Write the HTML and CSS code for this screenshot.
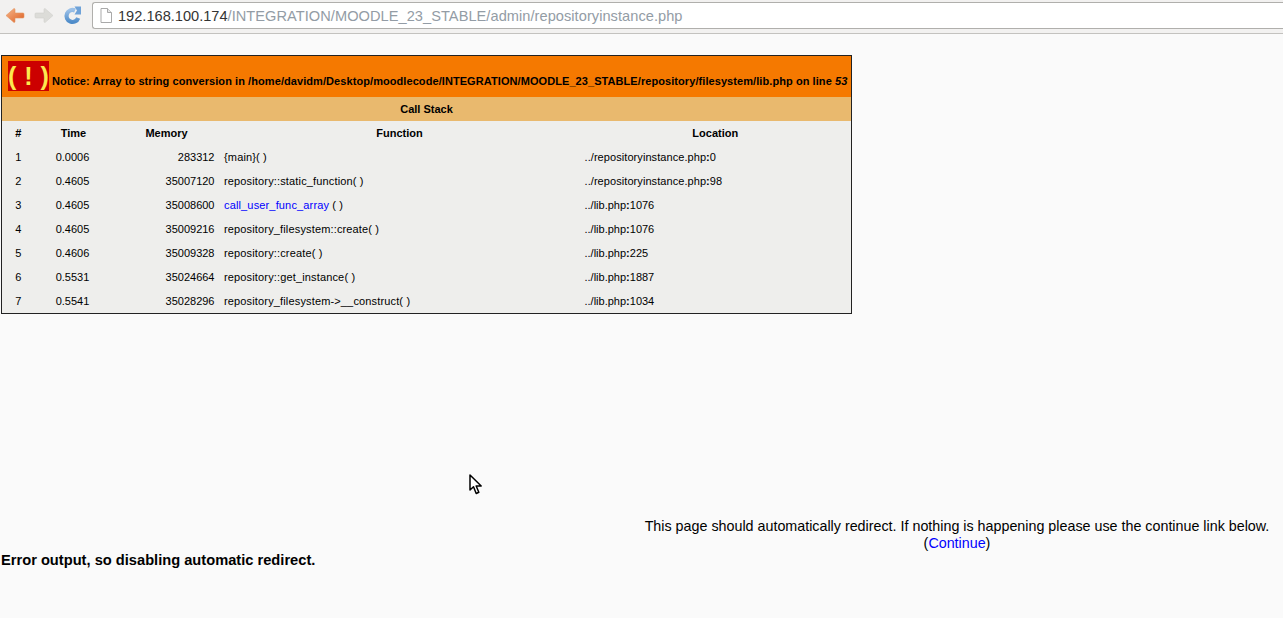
FILE: index.html
```html
<!DOCTYPE html>
<html lang="en">
<head>
<meta charset="utf-8">
<title>repositoryinstance.php</title>
<link rel="stylesheet" href="styles.css">
</head>
<body>
<header class="toolbar">
  <svg class="nav-icon" width="20" height="20" viewBox="0 0 20 20"><defs><linearGradient id="back" x1="0" y1="0" x2="1" y2="1"><stop offset="0" stop-color="#f6b68a"/><stop offset="1" stop-color="#dd5f22"/></linearGradient></defs><path d="M9 3.500 L1 10.500 L9 17.500 Q10 17.500 10 16.500 L10 13 L18 13 Q19 13 19 12 L19 9 Q19 8 18 8 L10 8 L10 4.500 Q10 3.500 9 3.500 Z" fill="url(#back)" stroke="#e2935f" stroke-width="0.600"/></svg>
  <svg class="nav-icon" width="20" height="20" viewBox="0 0 20 20"><path d="M11 3.500 L19 10.500 L11 17.500 Q10 17.500 10 16.500 L10 13 L2 13 Q1 13 1 12 L1 9 Q1 8 2 8 L10 8 L10 4.500 Q10 3.500 11 3.500 Z" fill="#dcdcd8" stroke="#d0d0cc" stroke-width="0.600"/></svg>
  <svg class="nav-icon" width="20" height="20" viewBox="0 0 20 20"><defs><linearGradient id="reload" x1="0" y1="0" x2="0" y2="1"><stop offset="0" stop-color="#9cc1e8"/><stop offset="1" stop-color="#4f8cc9"/></linearGradient></defs><path d="M15.200 13 A6 6 0 1 1 12 5.500" fill="none" stroke="url(#reload)" stroke-width="4.200"/><path d="M11.500 1.500 L18 1.500 L18 9.500 L11.500 9.500 L14 5.500 Z" fill="#6ea2d8"/></svg>
  <div class="address">
    <svg class="page-icon" width="12" height="15" viewBox="0 0 12 15"><path d="M1 .5 H7.500 L11.500 4.500 V14.500 H1 Z" fill="#fff" stroke="#a9a9a9"/><path d="M7.500 .5 V4.500 H11.500" fill="#e8e8e8" stroke="#a9a9a9"/></svg>
    <span class="host">192.168.100.174</span><span class="path">/INTEGRATION/MOODLE_23_STABLE/admin/repositoryinstance.php</span>
  </div>
</header>
<main class="page">
  <table class="xdebug">
    <colgroup>
      <col class="c-num"><col class="c-time"><col class="c-mem"><col class="c-func"><col class="c-loc">
    </colgroup>
    <tr class="notice-row">
      <th colspan="5"><div class="notice"><span class="alert">( ! )</span><span class="message">Notice: Array to string conversion in /home/davidm/Desktop/moodlecode/INTEGRATION/MOODLE_23_STABLE/repository/filesystem/lib.php on line <i>53</i></span></div></th>
    </tr>
    <tr class="stack-title"><th colspan="5">Call Stack</th></tr>
    <tr class="heads"><th class="num">#</th><th class="nudge">Time</th><th class="nudge">Memory</th><th>Function</th><th>Location</th></tr>
    <tr><td class="num">1</td><td class="time">0.0006</td><td class="mem">283312</td><td class="func">{main}( )</td><td class="loc wide">../repositoryinstance.php<b>:</b>0</td></tr>
    <tr><td class="num">2</td><td class="time">0.4605</td><td class="mem">35007120</td><td class="func">repository::static_function( )</td><td class="loc wide">../repositoryinstance.php<b>:</b>98</td></tr>
    <tr><td class="num">3</td><td class="time">0.4605</td><td class="mem">35008600</td><td class="func"><a href="#">call_user_func_array</a> ( )</td><td class="loc">../lib.php<b>:</b>1076</td></tr>
    <tr><td class="num">4</td><td class="time">0.4605</td><td class="mem">35009216</td><td class="func">repository_filesystem::create( )</td><td class="loc">../lib.php<b>:</b>1076</td></tr>
    <tr><td class="num">5</td><td class="time">0.4606</td><td class="mem">35009328</td><td class="func">repository::create( )</td><td class="loc">../lib.php<b>:</b>225</td></tr>
    <tr><td class="num">6</td><td class="time">0.5531</td><td class="mem">35024664</td><td class="func">repository::get_instance( )</td><td class="loc">../lib.php<b>:</b>1887</td></tr>
    <tr><td class="num">7</td><td class="time">0.5541</td><td class="mem">35028296</td><td class="func">repository_filesystem-&gt;__construct( )</td><td class="loc">../lib.php<b>:</b>1034</td></tr>
  </table>
  <div class="redirect">
    <div>This page should automatically redirect. If nothing is happening please use the continue link below.</div>
    <div>(<a href="#">Continue</a>)</div>
  </div>
  <p class="disabled">Error output, so disabling automatic redirect.</p>
</main>
<svg class="cursor" width="14" height="21" viewBox="0 0 14 21"><path d="M1 1 V16 L4.500 12.800 L7.200 19.500 L9.800 18.300 L7.200 12 L12.200 12 Z" fill="#fff" stroke="#000" stroke-width="1.500" stroke-linejoin="round"/></svg>
</body>
</html>
```
FILE: styles.css
```css
html, body {
  margin: 0;
  padding: 0;
}
body {
  height: 618px;
  overflow: hidden;
  background: #fafafa;
  color: #000;
  font-family: "Liberation Sans", Arial, sans-serif;
  position: relative;
}
.toolbar {
  height: 34px;
  box-sizing: border-box;
  display: flex;
  align-items: flex-start;
  gap: 9px;
  padding: 2px 0 0 5px;
  background: #f2f1f0;
  border-bottom: 1px solid #c3c2bf;
}
.nav-icon {
  flex: none;
  margin-top: 3px;
}
.address {
  flex: 1;
  height: 27px;
  box-sizing: border-box;
  display: flex;
  align-items: center;
  padding-left: 7px;
  background: #fff;
  border: 1px solid #b0afac;
  border-right: 0;
  border-radius: 3px 0 0 3px;
  font-size: 14.6px;
}
.page-icon {
  margin-right: 6px;
  flex: none;
}
.host {
  color: #333;
}
.path {
  color: #939ca5;
  letter-spacing: 0.05px;
}
.page {
  padding: 21px 0 0 1px;
}
.xdebug {
  width: 851px;
  table-layout: fixed;
  border-collapse: collapse;
  border: 1px solid #222;
  font-size: 11px;
  background: #eeeeec;
}
.c-num { width: 32px; }
.c-time { width: 78px; }
.c-mem { width: 108px; }
.c-func { width: 360px; }
.xdebug th, .xdebug td {
  padding: 0;
  height: 24px;
}
.xdebug a {
  color: #00f;
  text-decoration: none;
}
.notice-row th {
  background: #f57900;
  height: 41px;
  text-align: left;
}
.notice {
  display: flex;
  align-items: center;
  gap: 3px;
  padding-left: 6px;
  height: 41px;
}
.message {
  white-space: nowrap;
  letter-spacing: 0.073px;
  margin-top: 8px;
}
.alert {
  width: 41px;
  height: 30px;
  margin-top: -1px;
  flex: none;
  text-align: center;
  line-height: 30px;
  font-size: 25px;
  word-spacing: 1px;
  white-space: nowrap;
  background: #cc0000;
  color: #fce94f;
}
.stack-title th {
  background: #e9b96e;
}
.xdebug .num {
  padding-left: 1px;
}
.xdebug .nudge {
  padding-left: 2px;
}
.num, .time {
  text-align: center;
}
.xdebug .mem {
  text-align: right;
  padding-right: 5px;
}
.xdebug .func {
  padding-left: 4.5px;
  letter-spacing: 0.15px;
}
.xdebug .loc {
  padding-left: 5px;
}
.xdebug .wide {
  letter-spacing: 0.07px;
}
.redirect {
  width: 640px;
  margin: 204px 6px 0 auto;
  text-align: center;
  font-size: 14.3px;
  line-height: 17px;
}
.redirect a {
  color: #00f;
  text-decoration: none;
}
.disabled {
  margin: 0;
  font-size: 14.67px;
  line-height: 17px;
  font-weight: bold;
}
.cursor {
  position: absolute;
  left: 469px;
  top: 474px;
}
```
